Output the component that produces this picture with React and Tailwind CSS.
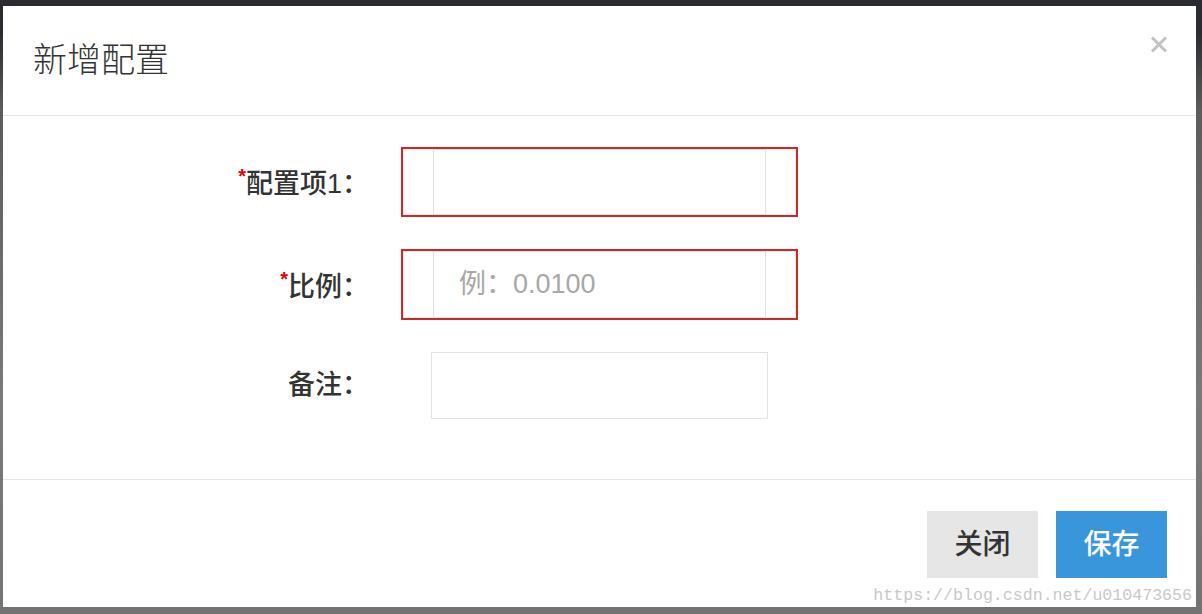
import React from "react";

const font = { fontFamily: '"Liberation Sans", "Noto Sans CJK SC", sans-serif' };

const Field = ({ label, required, invalid, placeholder, height }) => {
  return (
    <div className="flex items-center">
      <label className="w-[366px] text-right text-[27px] font-medium leading-none text-[#333]">
        {required && <span className="align-super text-[20px] font-bold text-[#e10000]">*</span>}
        {label}
      </label>
      <div
        className={`ml-[32px] w-[397px] ${
          invalid ? "border-2 border-[#c62b2b] px-[30px] shadow-[inset_0_0_2px_#f5b5b5]" : "px-[30px]"
        }`}
      >
        <input
          type="text"
          placeholder={placeholder}
          className={`block w-full ${height} border border-[#e3e3e3] bg-white pl-[25px] text-[27px] text-[#333] outline-none placeholder:text-[#a8a8a8]`}
          style={font}
        />
      </div>
    </div>
  );
};

export default function App() {
  return (
    <div
      className="relative h-[614px] w-full overflow-hidden pt-[6px] pl-[3px] pr-[6px] pb-[7px] bg-[linear-gradient(to_bottom,#2a2c31_0px,#2a2c31_32px,#5c5c5c_110px,#7a7a7a_400px,#737373_614px)]"
      style={font}
    >
      <div className="flex h-full flex-col bg-white">
        {/* header */}
        <div className="flex h-[110px] shrink-0 justify-between border-b border-[#e5e5e5] pl-[30px] pr-[28px]">
          <h4
            className="mb-[6px] self-center text-[34px] font-light leading-none text-[#333]"
            style={{ fontFamily: '"Noto Sans CJK SC", sans-serif' }}
          >
            新增配置
          </h4>
          <button className="mt-[29px] self-start">
            <svg width="18" height="19" viewBox="0 0 18 19" fill="none">
              <path d="M2 2.5 L16 16.5 M16 2.5 L2 16.5" stroke="#c2c2c2" strokeWidth="3" />
            </svg>
          </button>
        </div>

        {/* body */}
        <div className="flex flex-1 flex-col gap-[32px] pt-[31px]">
          <Field label="配置项1：" required invalid height="h-[66px]" />
          <Field label="比例：" required invalid placeholder="例：0.0100" height="h-[67px]" />
          <Field label="备注：" height="h-[67px]" />
        </div>

        {/* footer */}
        <div className="flex h-[128px] shrink-0 justify-end gap-[18px] border-t border-[#e5e5e5] pt-[31px] pr-[29px]">
          <button className="h-[67px] w-[111px] bg-[#e6e6e6] text-[28px] font-medium text-[#333]">关闭</button>
          <button className="h-[67px] w-[111px] bg-[#3a96db] text-[28px] font-medium text-white">保存</button>
        </div>
      </div>

      <div
        className="absolute bottom-[9px] right-[10px] text-[16.6px] leading-none text-[#c8c8c8]"
        style={{ fontFamily: '"Liberation Mono", monospace' }}
      >
        https://blog.csdn.net/u010473656
      </div>
    </div>
  );
}
